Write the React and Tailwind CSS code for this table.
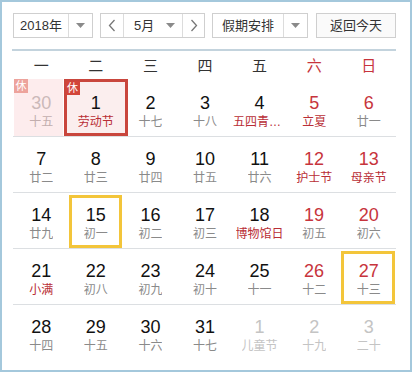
import React from "react";

const weekdays = ["一", "二", "三", "四", "五", "六", "日"];

// d: day, l: lunar / festival, t: type
const weeks = [
  [
    { d: 30, l: "十五", t: "prevRest" },
    { d: 1, l: "劳动节", t: "holiday" },
    { d: 2, l: "十七" },
    { d: 3, l: "十八" },
    { d: 4, l: "五四青年节", fest: true },
    { d: 5, l: "立夏", fest: true },
    { d: 6, l: "廿一" },
  ],
  [
    { d: 7, l: "廿二" },
    { d: 8, l: "廿三" },
    { d: 9, l: "廿四" },
    { d: 10, l: "廿五" },
    { d: 11, l: "廿六" },
    { d: 12, l: "护士节", fest: true },
    { d: 13, l: "母亲节", fest: true },
  ],
  [
    { d: 14, l: "廿九" },
    { d: 15, l: "初一", mark: true },
    { d: 16, l: "初二" },
    { d: 17, l: "初三" },
    { d: 18, l: "博物馆日", fest: true },
    { d: 19, l: "初五" },
    { d: 20, l: "初六" },
  ],
  [
    { d: 21, l: "小满", fest: true },
    { d: 22, l: "初八" },
    { d: 23, l: "初九" },
    { d: 24, l: "初十" },
    { d: 25, l: "十一" },
    { d: 26, l: "十二" },
    { d: 27, l: "十三", mark: true },
  ],
  [
    { d: 28, l: "十四" },
    { d: 29, l: "十五" },
    { d: 30, l: "十六" },
    { d: 31, l: "十七" },
    { d: 1, l: "儿童节", t: "next" },
    { d: 2, l: "十九", t: "next" },
    { d: 3, l: "二十", t: "next" },
  ],
];

const font = { fontFamily: '"Liberation Sans", "Noto Sans CJK SC", sans-serif' };

function Caret() {
  return (
    <svg width="9" height="5" viewBox="0 0 9 5">
      <path d="M0 0h9L4.5 5z" fill="#8a8a8a" />
    </svg>
  );
}

function Chevron({ dir }) {
  return (
    <svg width="8" height="13" viewBox="0 0 8 13">
      <path
        d={dir === "left" ? "M6.5 1L1.5 6.5l5 5.5" : "M1.5 1l5 5.5-5 5.5"}
        fill="none"
        stroke="#777"
        strokeWidth="1.3"
      />
    </svg>
  );
}

function Cell({ c, col }) {
  const weekend = col >= 5;
  let numColor = weekend ? "text-[#c7343c]" : "text-[#111]";
  let lunarColor = c.fest ? "text-[#b92e36]" : "text-[#8a8a8a]";
  if (c.t === "next") {
    numColor = "text-[#c4c4c4]";
    lunarColor = "text-[#c4c4c4]";
  }
  if (c.t === "prevRest") {
    numColor = "text-[#cbb9b9]";
    lunarColor = "text-[#c2aeae]";
  }
  if (c.t === "holiday") lunarColor = "text-[#b92e36]";

  return (
    <div className="relative flex h-[55px] flex-col items-center">
      {c.t === "prevRest" && (
        <div className="absolute -top-[2px] bottom-0 left-0 right-[6px] bg-[#fdeced]">
          <span className="absolute left-0 top-0 flex h-[14px] w-[14px] items-center justify-center bg-[#eda39c] text-[11px] leading-none text-white">
            休
          </span>
        </div>
      )}
      {c.t === "holiday" && (
        <div className="absolute -left-[5px] -right-[5px] -top-[2px] bottom-0 border-[3px] border-[#c9463d] bg-[#fbeeee]">
          <span className="absolute -left-px -top-px flex h-[14px] w-[14px] items-center justify-center bg-[#d2453a] text-[11px] leading-none text-white">
            休
          </span>
        </div>
      )}
      {c.mark && (
        <div className="absolute bottom-0 left-0 right-[1px] top-[2px] border-[3px] border-[#f3c53a]" />
      )}
      <span className={`relative mt-[11px] text-[18px] leading-[22px] ${numColor}`}>{c.d}</span>
      <span
        className={`relative mt-[1px] max-w-[53px] truncate text-[12px] leading-[15px] ${lunarColor}`}
      >
        {c.l}
      </span>
    </div>
  );
}

export default function App() {
  return (
    <div
      className="h-[372px] w-[412px] overflow-hidden border-2 border-[#a4c8dc] bg-white"
      style={font}
    >
      <div className="mt-[11px] flex h-[25px] items-stretch pl-[11px] text-[13px] text-[#333]">
        <div className="flex w-[80px] border border-[#cfcfcf]">
          <div className="flex flex-1 items-center justify-center">2018年</div>
          <div className="flex w-[24px] items-center justify-center border-l border-[#dcdcdc]">
            <Caret />
          </div>
        </div>
        <div className="ml-[7px] flex w-[105px] border border-[#cfcfcf]">
          <div className="flex w-[23px] items-center justify-center border-r border-[#dcdcdc]">
            <Chevron dir="left" />
          </div>
          <div className="flex flex-1 items-center pl-[10px]">5月</div>
          <div className="flex w-[24px] items-center justify-center">
            <Caret />
          </div>
          <div className="flex w-[22px] items-center justify-center border-l border-[#dcdcdc]">
            <Chevron dir="right" />
          </div>
        </div>
        <div className="ml-[7px] flex w-[96px] border border-[#cfcfcf]">
          <div className="flex flex-1 items-center justify-center">假期安排</div>
          <div className="flex w-[24px] items-center justify-center border-l border-[#dcdcdc]">
            <Caret />
          </div>
        </div>
        <div className="ml-[8px] flex w-[80px] items-center justify-center border border-[#cfcfcf] bg-[#fafafa]">
          返回今天
        </div>
      </div>

      <div className="ml-[10px] mr-[14px] mt-[11px] h-[2px] bg-[#c3d3dd]" />

      <div className="ml-[12px] mr-[14px] grid grid-cols-7 text-[15px]">
        {weekdays.map((w, i) => (
          <div
            key={w}
            className={`flex h-[30px] items-center justify-center ${i >= 5 ? "text-[#c7343c]" : "text-[#333]"}`}
          >
            {w}
          </div>
        ))}
      </div>

      <div className="ml-[11px] mr-[14px]">
        {weeks.map((wk, r) => (
          <div
            key={r}
            className={`grid grid-cols-7 pl-[1px] ${r < weeks.length - 1 ? "border-b border-[#dcdfe2]" : ""}`}
          >
            {wk.map((c, i) => (
              <Cell key={i} c={c} col={i} />
            ))}
          </div>
        ))}
      </div>
    </div>
  );
}
